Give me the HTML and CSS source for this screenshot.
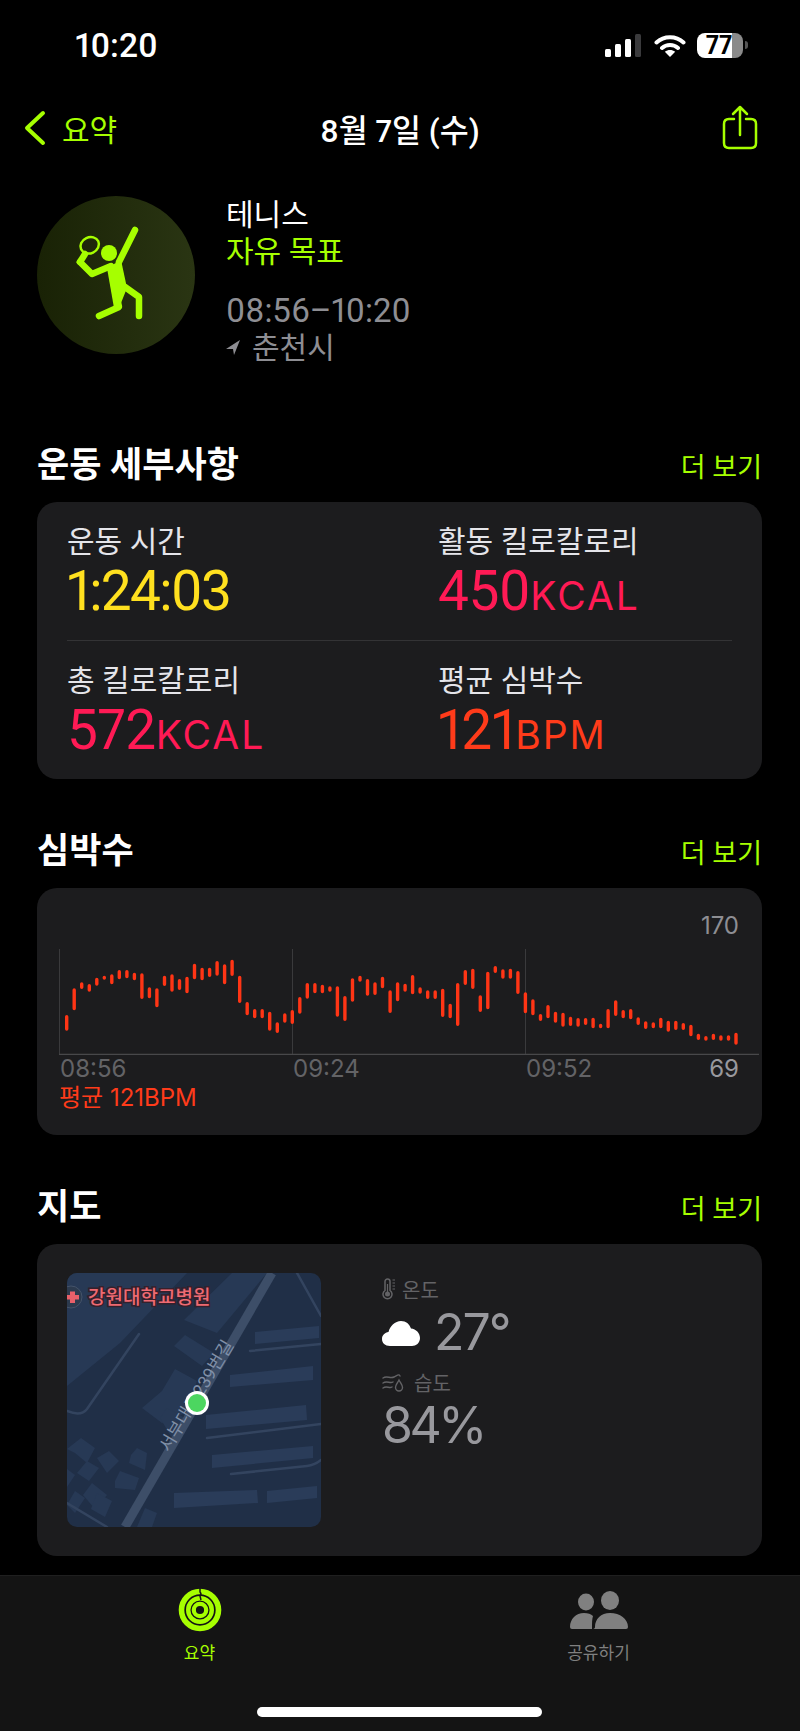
FILE: index.html
```html
<!DOCTYPE html>
<html lang="ko">
<head>
  <meta charset="UTF-8" />
  <title>운동 요약</title>
  <link rel="stylesheet" href="styles.css">
</head>
<body>
  <div class="status-bar">
    <span class="clock">10:20</span>
    <div class="status-icons">
      <svg class="signal" viewBox="0 0 36 23">
        <rect x="0" y="15" width="6" height="8" rx="1.5" fill="#fff"/>
        <rect x="10" y="10" width="6" height="13" rx="1.5" fill="#fff"/>
        <rect x="20" y="5" width="6" height="18" rx="1.5" fill="#fff"/>
        <rect x="30" y="0" width="6" height="23" rx="1.5" fill="#3a3a3c"/>
      </svg>
      <svg class="wifi" viewBox="0 0 32 23">
        <path d="M2.5 8.5C10 1.5 22 1.500 29.500 8.500M8 14C12.500 10 19.500 10 24 14" fill="none" stroke="#fff" stroke-width="4" stroke-linecap="round"/>
        <path d="M16 23L10.800 17.800C14 15.400 18 15.400 21.200 17.800Z" fill="#fff"/>
      </svg>
      <div class="battery">
        <span class="battery-level">77</span>
      </div>
      <div class="battery-nub"></div>
    </div>
  </div>

  <div class="nav-bar">
    <a class="nav-back">
      <svg class="chevron" viewBox="0 0 22 36">
        <path d="M19 3L3 18L19 33" fill="none" stroke="#a6ff00" stroke-width="4" stroke-linecap="round" stroke-linejoin="round"/>
      </svg>
      <span>요약</span>
    </a>
    <div class="nav-title">8월 7일 (수)</div>
    <svg class="share" viewBox="0 0 36 45">
      <path d="M12 14H7Q2 14 2 19V38Q2 43 7 43H29Q34 43 34 38V19Q34 14 29 14H24" fill="none" stroke="#a6ff00" stroke-width="2.500" stroke-linecap="round"/>
      <path d="M18 30V2M11 9L18 2L25 9" fill="none" stroke="#a6ff00" stroke-width="2.500" stroke-linecap="round" stroke-linejoin="round"/>
    </svg>
  </div>

  <div class="workout">
    <div class="workout-badge">
      <svg viewBox="0 0 158 158">
        <g fill="none" stroke="#a6ff00" stroke-width="6.500" stroke-linecap="round" stroke-linejoin="round">
          <path d="M98 34L82 66"/>
          <path d="M43 66L55 78L74 70"/>
          <path d="M43 66L48 58"/>
          <path d="M62 120L82 111L77 88"/>
          <path d="M88 91L102 101V120"/>
        </g>
        <ellipse cx="52.700" cy="49.300" rx="9.500" ry="8" transform="rotate(-25 52.700 49.300)" fill="none" stroke="#a6ff00" stroke-width="2.500"/>
        <circle cx="72" cy="57" r="8" fill="#a6ff00"/>
        <path d="M70 72L84 64L90 92L82 112H77Z" fill="#a6ff00"/>
      </svg>
    </div>
    <div class="workout-info">
      <div class="workout-name">테니스</div>
      <div class="workout-goal">자유 목표</div>
      <div class="workout-time">08:56–10:20</div>
      <div class="workout-place">
        <svg class="place-arrow" viewBox="0 0 14 15"><path d="M14 0L0 9H7L8 15Z" fill="#8e8e93"/></svg>
        <span>춘천시</span>
      </div>
    </div>
  </div>

  <section class="section">
    <div class="section-head">
      <h2>운동 세부사항</h2>
      <a class="more">더 보기</a>
    </div>
    <div class="card details">
      <div class="metric-row">
        <div class="metric">
          <div class="metric-label">운동 시간</div>
          <div class="metric-value yellow">1:24:03</div>
        </div>
        <div class="metric">
          <div class="metric-label">활동 킬로칼로리</div>
          <div class="metric-value pink">450<small>KCAL</small></div>
        </div>
      </div>
      <div class="metric-row last">
        <div class="metric">
          <div class="metric-label">총 킬로칼로리</div>
          <div class="metric-value pink">572<small>KCAL</small></div>
        </div>
        <div class="metric">
          <div class="metric-label">평균 심박수</div>
          <div class="metric-value red">121<small>BPM</small></div>
        </div>
      </div>
    </div>
  </section>

  <section class="section">
    <div class="section-head">
      <h2>심박수</h2>
      <a class="more">더 보기</a>
    </div>
    <div class="card heart">
      <div class="chart-max">170</div>
      <svg class="chart" viewBox="0 0 700 106">
        <path d="M0.500 0V105M233.500 0V105M466.500 0V105" stroke="#3a3a3c" stroke-width="1" fill="none"/>
        <path d="M0 105.500H700" stroke="#48484a" stroke-width="1.500" fill="none"/>
        <path class="chart-bars" d="M7.700 67.700V80M15.200 41V59.600M22.700 35V38.300M30.300 36.700V41M37.800 30.400V35M45.300 28.400V29M52.800 27V33.600M60.300 22.700V28.600M67.900 22.700V27.600M75.400 25.400V29.600M82.900 26V48.300M90.400 40V47.600M97.900 41V56.600M105.500 28.400V35.300M113 27V41M120.500 31.700V39.300M128 29.400V42.600M135.500 16.400V28.600M143.100 20.400V29.600M150.600 20.400V26.300M158.100 13.700V25M165.600 17V33.600M173.100 12.400V25.300M180.700 28.400V52.300M188.200 54.700V64.600M195.700 61.700V67.600M203.200 61.700V67.600M210.700 64.400V80M218.300 75V82.300M225.800 66V72M233.300 62.700V73.300M240.800 49.700V63M248.300 35.700V48M255.900 35.700V42.600M263.400 37.400V42.600M270.900 39V41M278.400 39V66M285.900 48.700V70.300M293.500 31V51M301 28.400V31M308.500 31.700V45M316 35V44.300M323.500 29.400V37.600M331.100 43V62.300M338.600 35V50.600M346.100 36.400V41M353.600 27.700V43.600M361.100 40V43M368.700 43V48.300M376.200 43V48.300M383.700 41.400V66.300M391.200 56.400V67.600M398.700 35.700V75.300M406.300 22.700V34.300M413.800 21.400V38.300M421.300 48V61.300M428.800 24.400V58.600M436.300 18.700V22.300M443.900 22V28M451.400 21.400V28M458.900 23.700V43.300M466.400 45V62.600M473.900 52V64.600M481.500 66.700V70.300M489 57.700V67.600M496.500 64.400V72M504 65.400V76M511.500 69.400V75.300M519.100 70.700V76M526.600 70.700V74.300M534.100 70.400V77.600M541.600 76.400V77.600M549.100 61.700V77.600M556.700 53V65.300M564.200 62.700V67.600M571.700 61.700V68.600M579.200 70V74.300M586.700 74V78.300M594.300 75V77.600M601.800 70.400V77.600M609.300 73.400V81M616.800 73.400V79.300M624.300 75.700V79.300M631.900 77.400V85.600M639.400 86.400V89.300M646.900 88.700V90M654.400 86.400V89.300M661.900 88V90M669.500 88V90M677 85.400V94"/>
      </svg>
      <div class="chart-labels">
        <span>08:56</span>
        <span>09:24</span>
        <span>09:52</span>
        <span class="chart-min">69</span>
      </div>
      <div class="chart-avg">평균 121BPM</div>
    </div>
  </section>

  <section class="section last">
    <div class="section-head">
      <h2>지도</h2>
      <a class="more">더 보기</a>
    </div>
    <div class="card map-card">
      <svg class="map" viewBox="0 0 254 254">
        <rect width="254" height="254" fill="#202f47"/>
        <g fill="#273955">
          <path d="M0 0H120L53 70L0 113Z"/>
          <path d="M117 47L165 0H200L150 60Z"/>
          <path d="M107 73L118 62L147 80L135 93Z"/>
          <path d="M75 135L95 118L108 96L130 108L118 140L95 150Z"/>
          <path d="M93 145L100 135L118 145L105 165Z"/>
          <path d="M64 182L70 175L80 180L78 197L62 190Z"/>
          <path d="M48 208L53 198L72 205L68 217L48 215Z"/>
          <path d="M25 210L40 222L28 236L16 222Z"/>
          <path d="M0 176L14 165L28 175L20 190L8 180Z"/>
          <path d="M30 185L42 178L52 188L40 200Z"/>
          <path d="M8 218L18 225L8 240L0 232Z"/>
          <path d="M78 235L90 240L85 254H70Z"/>
          <path d="M20 188L32 195L22 208L10 200Z"/>
          <path d="M0 196L8 202L0 214Z"/>
          <path d="M30 220L45 228L38 244L24 236Z"/>
        </g>
        <g fill="#2a3c59">
          <path d="M188 59L252 53V65L188 71Z"/>
          <path d="M163 102L246 93V107L163 114Z"/>
          <path d="M139 142L239 132L240 147L139 156Z"/>
          <path d="M145 182L246 173V185L145 195Z"/>
          <path d="M107 220L190 217L191 230L107 235Z"/>
          <path d="M200 218L250 213V225L200 230Z"/>
        </g>
        <g fill="none" stroke="#33445f" stroke-width="2.500" stroke-linecap="round">
          <path d="M230 0L254 43"/>
          <path d="M183 78L254 71"/>
          <path d="M140 165L254 151"/>
          <path d="M164 201L240 193Q248 192 254 187"/>
          <path d="M72 61L20 136Q14 144 0 138"/>
          <path d="M0 230L40 254"/>
        </g>
        <path d="M205 0L58 254" stroke="#3d4e68" stroke-width="9" fill="none"/>
        <text class="map-road" transform="translate(102 180) rotate(-59)">서부대로239번길</text>
        <circle cx="4" cy="24" r="11" fill="#2c3a4e" stroke="#44536a" stroke-width="1"/>
        <path d="M3 18.500H8V22H12V26.500H8V30H3V26.500H0V22H3Z" fill="#e8606a"/>
        <text class="map-place" x="21" y="31">강원대학교병원</text>
        <circle cx="130" cy="130" r="12" fill="#fff"/>
        <circle cx="130" cy="130" r="9" fill="#4cd660"/>
      </svg>
      <div class="weather">
        <div class="weather-label">
          <svg class="thermo" viewBox="0 0 14 22">
            <path d="M3 3.500a2.500 2.500 0 0 1 5 0V12.500a4.500 4.500 0 1 1-5 0Z" fill="none" stroke="#636366" stroke-width="1.500"/>
            <circle cx="5.500" cy="16" r="2.500" fill="#636366"/>
            <path d="M5.500 6V15M10.500 2H13M10.500 5H13M10.500 8H13M10.500 11H13" stroke="#636366" stroke-width="1.200" fill="none"/>
          </svg>
          <span>온도</span>
        </div>
        <div class="weather-value temp">
          <svg class="cloud" viewBox="0 0 38 25">
            <path d="M8 25C3 25 0 22 0 18C0 14 3 11.500 6.500 11C8 5 13 0 19 0C24 0 27.500 3 29 7.500C34 8 38 12 38 17C38 22 34 25 30 25Z" fill="#fff"/>
          </svg>
          <span>27°</span>
        </div>
        <div class="weather-label humid">
          <svg class="drops" viewBox="0 0 23 19">
            <path d="M1 5C5 2 8 6 12 4S17 1 18 3M1 10C5 7 8 11 11 9M1 15C5 12 7 16 10 14" fill="none" stroke="#636366" stroke-width="1.400" stroke-linecap="round"/>
            <path d="M17 7C15.500 10 13.500 12 13.500 14.500a3.500 3.500 0 0 0 7 0C20.500 12 18.500 10 17 7Z" fill="none" stroke="#636366" stroke-width="1.400"/>
          </svg>
          <span>습도</span>
        </div>
        <div class="weather-value humid-value">84%</div>
      </div>
    </div>
  </section>

  <nav class="tab-bar">
    <div class="tab active">
      <svg class="tab-rings" viewBox="0 0 44 44">
        <g fill="none" stroke="#a6ff00">
          <circle cx="22" cy="22" r="18.500" stroke-width="5.600"/>
          <circle cx="22" cy="22" r="11.800" stroke-width="4.400"/>
          <circle cx="22" cy="22" r="6.200" stroke-width="4.200"/>
        </g>
        <path d="M22 0V4Q24 6 22 8L23 12" fill="none" stroke="#141414" stroke-width="1.500"/>
      </svg>
      <span>요약</span>
    </div>
    <div class="tab">
      <svg class="tab-people" viewBox="0 0 58 38">
        <ellipse cx="16" cy="11" rx="8" ry="8.500" fill="#808080"/>
        <ellipse cx="40" cy="9.500" rx="9" ry="9.500" fill="#808080"/>
        <path d="M22 36V38H2Q0 38 0 36C0 28 6 22 14 22C18 22 21 23 23 25C22 28 22 32 22 36Z" fill="#808080"/>
        <path d="M22 38Q25 38 25 36C25 28 31 22 40 22C50 22 58 28 58 36Q58 38 56 38Z" fill="#808080"/>
      </svg>
      <span>공유하기</span>
    </div>
    <div class="home-indicator"></div>
  </nav>
</body>
</html>
```

FILE: styles.css
```css
* {
  box-sizing: border-box;
}

body {
  margin: 0;
  width: 800px;
  height: 1731px;
  background-color: #000;
  color: #fff;
  font-family: Roboto, "Noto Sans CJK KR", sans-serif;
  font-variant-numeric: proportional-nums;
  display: flex;
  flex-direction: column;
  overflow: hidden;
}

/* status bar */
.status-bar {
  height: 90px;
  display: flex;
  align-items: center;
  justify-content: space-between;
  padding: 0 52px 0 75px;
}

.clock {
  font-size: 33.500px;
  font-weight: 500;
}

.status-icons {
  display: flex;
  align-items: center;
}

.signal {
  width: 36px;
  height: 23px;
  margin-right: 13px;
}

.wifi {
  width: 32px;
  height: 23px;
  margin-right: 11px;
}

.battery {
  width: 46px;
  height: 25px;
  border-radius: 8px;
  background: linear-gradient(to right, #fff 77%, #8a8a8a 77%);
  display: flex;
  align-items: center;
  justify-content: center;
}

.battery-level {
  color: #000;
  font-size: 25px;
  font-weight: 700;
  padding-right: 2px;
}

.battery-nub {
  width: 3px;
  height: 8px;
  margin-left: 2px;
  border-radius: 0 3px 3px 0;
  background: #555;
}

/* nav */
.nav-bar {
  height: 56px;
  margin-top: 10px;
  position: relative;
  display: flex;
  align-items: center;
  justify-content: space-between;
  padding: 0 42px 0 24px;
}

.nav-back {
  display: flex;
  align-items: center;
  gap: 16px;
  color: #a6ff00;
  font-size: 30px;
}

.chevron {
  width: 22px;
  height: 36px;
}

.nav-title {
  position: absolute;
  left: 0;
  right: 0;
  text-align: center;
  font-size: 31.500px;
  font-weight: 500;
}

.share {
  width: 36px;
  height: 45px;
  margin-top: -2px;
}

/* workout header */
.workout {
  display: flex;
  gap: 31px;
  height: 158px;
  margin: 40px 0 87px 37px;
}

.workout-badge {
  width: 158px;
  height: 158px;
  border-radius: 50%;
  background: linear-gradient(to right, #192205, #2a3513);
}

.workout-badge svg {
  display: block;
  width: 158px;
  height: 158px;
}

.workout-info {
  font-size: 30px;
  line-height: 37px;
}

.workout-goal {
  color: #a6ff00;
}

.workout-time {
  margin-top: 22px;
  color: #8e8e93;
  font-size: 33px;
}

.workout-place {
  display: flex;
  align-items: center;
  gap: 12px;
  color: #8e8e93;
}

.place-arrow {
  width: 14px;
  height: 15px;
}

/* sections */
.section {
  padding: 0 38px 48px 37px;
}

.section.last {
  padding-bottom: 0;
}

.section-head {
  height: 40px;
  margin-bottom: 21px;
  display: flex;
  align-items: center;
  justify-content: space-between;
}

.section-head h2 {
  margin: 0;
  font-size: 35px;
  font-weight: 700;
}

.more {
  color: #a6ff00;
  font-size: 27px;
  margin-top: 8px;
}

.card {
  background-color: #1c1c1e;
  border-radius: 20px;
}

/* details card */
.details {
  padding: 22px 30px 0;
}

.metric-row {
  display: grid;
  grid-template-columns: 371px 1fr;
  padding-bottom: 17px;
  border-bottom: 1px solid #333335;
  margin-bottom: 22px;
}

.metric-row.last {
  border-bottom: none;
  margin-bottom: 0;
}

.metric-label {
  height: 36px;
  line-height: 36px;
  font-size: 30px;
  color: #e5e5ea;
}

.metric-value {
  height: 63px;
  line-height: 63px;
  font-size: 55px;
  letter-spacing: -0.500px;
}

.metric-value small {
  font-family: Inter, sans-serif;
  font-size: 39px;
  letter-spacing: 2px;
}

.yellow {
  color: #ffe01f;
  letter-spacing: -1.700px;
}

.pink {
  color: #ff1a55;
}

.red {
  color: #ff3b1a;
}

/* heart rate card */
.heart {
  padding: 23px 3px 22px 22px;
}

.chart-max {
  height: 30px;
  line-height: 30px;
  margin-bottom: 8px;
  padding-right: 20px;
  text-align: right;
  font-family: Inter, sans-serif;
  font-size: 24px;
  color: #8e8e93;
}

.chart {
  display: block;
  width: 700px;
  height: 106px;
}

.chart-bars {
  fill: none;
  stroke: #ff3515;
  stroke-width: 3.400px;
  stroke-linecap: round;
}

.chart-labels {
  display: grid;
  grid-template-columns: 233px 233px 1fr auto;
  height: 28px;
  line-height: 28px;
  padding: 0 20px 0 1px;
  font-family: Inter, sans-serif;
  font-size: 24px;
  color: #636366;
}

.chart-min {
  color: #98989d;
}

.chart-avg {
  height: 30px;
  line-height: 30px;
  font-family: Inter, "Noto Sans CJK KR", sans-serif;
  font-size: 24px;
  color: #ff3b1a;
}

/* map card */
.map-card {
  display: flex;
  padding: 29px 30px;
}

.map {
  display: block;
  width: 254px;
  height: 254px;
  border-radius: 10px;
}

.map-road {
  fill: #8090a8;
  font-size: 17.500px;
}

.map-place {
  fill: #ee6a72;
  font-size: 19px;
  font-weight: 500;
  stroke: #35202c;
  stroke-width: 3px;
  paint-order: stroke;
}

.weather {
  margin-left: 61px;
  padding-top: 2px;
  color: #98989d;
}

.weather-label {
  height: 28px;
  display: flex;
  align-items: center;
  gap: 6px;
  font-size: 20px;
  color: #636366;
}

.weather-label.humid {
  margin-top: 7px;
  margin-bottom: 2px;
  gap: 9px;
}

.thermo {
  width: 14px;
  height: 22px;
}

.drops {
  width: 23px;
  height: 19px;
}

.weather-value {
  height: 54px;
  line-height: 54px;
  font-family: Inter, sans-serif;
  font-size: 50px;
  letter-spacing: -2px;
}

.weather-value.humid-value {
  letter-spacing: -3.500px;
}

.weather-value.temp {
  height: 58px;
  line-height: 58px;
  display: flex;
  align-items: center;
  gap: 14px;
}

.cloud {
  width: 38px;
  height: 25px;
  margin-top: 2px;
}

/* tab bar */
.tab-bar {
  margin-top: auto;
  height: 156px;
  background-color: #141414;
  border-top: 1px solid #1f1f1f;
  display: flex;
  position: relative;
}

.tab {
  width: 399px;
  display: flex;
  flex-direction: column;
  align-items: center;
  color: #808080;
  font-size: 17px;
}

.tab span {
  line-height: 24px;
}

.tab.active {
  color: #a6ff00;
}

.tab-rings {
  width: 44px;
  height: 44px;
  margin-top: 12px;
  margin-bottom: 9px;
}

.tab-people {
  width: 58px;
  height: 38px;
  margin-top: 15px;
  margin-bottom: 12px;
}

.home-indicator {
  position: absolute;
  left: 257px;
  top: 131px;
  width: 285px;
  height: 10px;
  border-radius: 5px;
  background: #fff;
}
```
